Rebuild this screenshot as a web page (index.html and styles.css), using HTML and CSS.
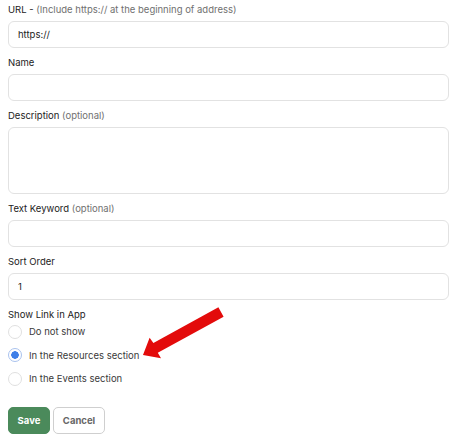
FILE: index.html
```html
<!DOCTYPE html>
<html lang="en">
<head>
  <meta charset="UTF-8">
  <meta name="viewport" content="width=device-width, initial-scale=1.0">
  <title>Edit Link</title>
  <link rel="stylesheet" href="styles.css">
</head>
<body>

<form class="link-form">
  <div class="field">
    <label for="linkUrl">URL - <span class="hint">(Include https:// at the beginning of address)</span></label>
    <input type="text" id="linkUrl" value="https://">
  </div>

  <div class="field">
    <label for="linkName">Name</label>
    <input type="text" id="linkName">
  </div>

  <div class="field">
    <label for="linkDescription">Description <span class="hint">(optional)</span></label>
    <textarea id="linkDescription"></textarea>
  </div>

  <div class="field">
    <label for="linkKeyword">Text Keyword <span class="hint">(optional)</span></label>
    <input type="text" id="linkKeyword">
  </div>

  <div class="field">
    <label for="linkOrder">Sort Order</label>
    <input type="text" id="linkOrder" value="1">
  </div>

  <div class="field radios">
    <label>Show Link in App</label>
    <label class="option"><input type="radio" name="showIn" value="none"> Do not show</label>
    <label class="option"><input type="radio" name="showIn" value="resources" checked> In the Resources section</label>
    <label class="option"><input type="radio" name="showIn" value="events"> In the Events section</label>
  </div>

  <div class="actions">
    <button type="submit" class="btn-save">Save</button>
    <button type="button" class="btn-cancel">Cancel</button>
  </div>

  <!-- seta de destaque -->
  <svg class="callout" width="459" height="437" viewBox="0 0 459 437">
    <polygon fill="#e30b0b" points="223.6,316.8 218.4,307.2 153.4,343 149.6,337.8 143,355 161,358.2 157.8,352.8"/>
  </svg>
</form>

</body>
</html>
```

FILE: styles.css
```css
body {
  font-family: Inter, "Noto Sans", Arial, sans-serif;
  margin: 0;
  padding: 0;
  background-color: #fff;
  color: #222;
}
.link-form {
  position: relative;
  padding: 2px 10px 0 8px;
}
.field {
  margin-bottom: 7px;
}
.field > label {
  display: block;
  font-size: 9.5px;
  line-height: 16px;
  margin-bottom: 3px;
  color: #222;
}
.hint {
  color: #707070;
}
.field input[type="text"],
.field textarea {
  display: block;
  width: 100%;
  box-sizing: border-box;
  height: 27px;
  padding: 0 9px;
  border: 1px solid #e2e2e2;
  border-radius: 6px;
  font-family: inherit;
  font-size: 9.5px;
  color: #222;
  background: #fff;
}
.field textarea {
  height: 67px;
  resize: none;
  padding: 6px 9px;
}
.radios > label:first-child {
  margin-bottom: -3px;
}
.radios .option {
  display: flex;
  align-items: center;
  height: 23.5px;
  line-height: 23px;
  font-size: 9.5px;
  color: #3a3a3a;
  margin: 0;
}
.radios input[type="radio"] {
  appearance: none;
  flex: none;
  width: 14px;
  height: 14px;
  margin: 0 7px 0 0;
  border: 1px solid #e0e0e0;
  border-radius: 50%;
  background: #fff;
}
.radios input[type="radio"]:checked {
  border-color: #a9c2ee;
  background: radial-gradient(circle, #3f7fe8 0 3.5px, #fff 4px);
}
.actions {
  display: flex;
  gap: 3px;
  margin-top: 16px;
}
.actions button {
  height: 27px;
  padding: 0;
  border-radius: 5px;
  font-family: inherit;
  font-size: 9.5px;
  font-weight: 700;
  cursor: pointer;
}
.btn-save {
  width: 42px;
  background-color: #4b8a5b;
  border: 1px solid #4b8a5b;
  color: #fff;
}
.btn-cancel {
  width: 52px;
  background: #fff;
  border: 1px solid #cfcfcf;
  color: #666;
  font-weight: 600;
}
.callout {
  position: absolute;
  left: 0;
  top: 0;
  pointer-events: none;
}
```
